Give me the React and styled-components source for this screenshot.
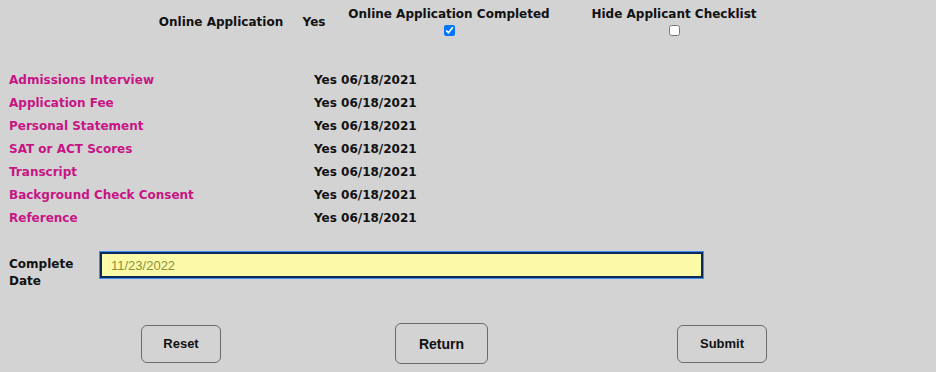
import React from "react";
import styled, { createGlobalStyle } from "styled-components";

const Global = createGlobalStyle`
  html, body {
    margin: 0;
    background: #d3d3d3;
  }
  body {
    font-family: "DejaVu Sans", sans-serif;
  }
`;

const Page = styled.div`
  width: 936px;
  height: 372px;
  background: #d3d3d3;
  font-family: "DejaVu Sans", sans-serif;
  font-weight: bold;
  font-size: 12px;
  color: #111;
`;

const Header = styled.div`
  display: flex;
  align-items: flex-start;
  padding-top: 7px;
  height: 73px;
  box-sizing: border-box;
`;

const HeaderCell = styled.div`
  width: ${(p) => p.$w}px;
  margin-left: ${(p) => p.$ml || 0}px;
  display: flex;
  flex-direction: column;
  align-items: center;
  padding-top: ${(p) => p.$pt || 0}px;
  white-space: nowrap;
`;

const Check = styled.input.attrs({ type: "checkbox" })`
  margin: 4px 0 0;
  width: 11px;
  height: 11px;
  accent-color: #0075ff;
`;

const List = styled.div`
  display: flex;
  flex-direction: column;
  padding-left: 9px;
  gap: 8px;
`;

const Row = styled.div`
  display: grid;
  grid-template-columns: 305px auto;
  line-height: 15px;
`;

const Label = styled.div`
  color: #c71585;
`;

const DateRow = styled.div`
  display: flex;
  align-items: flex-start;
  padding: 26px 0 0 9px;
`;

const DateLabel = styled.div`
  width: 91px;
  line-height: 17px;
  padding-top: 4px;
`;

const DateInput = styled.input`
  width: 603px;
  height: 26px;
  box-sizing: border-box;
  background: #fafaa8;
  border: 2px solid #0b2a5a;
  outline: 1px solid #3d8cf0;
  padding: 0 9px;
  font-family: "Liberation Sans", Arial, sans-serif;
  font-size: 13px;
  color: #8f8f3c;
`;

const Buttons = styled.div`
  display: grid;
  grid-template-columns: 141px 80px 174px 93px 189px 90px;
  align-items: center;
  margin-top: 33px;
`;

const Button = styled.button`
  grid-column: ${(p) => p.$col};
  width: ${(p) => p.$w}px;
  height: ${(p) => p.$h}px;
  background: #d3d3d3;
  border: 1px solid #6b6b6b;
  border-radius: 6px;
  font-family: "Liberation Sans", Arial, sans-serif;
  font-weight: bold;
  font-size: ${(p) => p.$fs || 13}px;
  color: #111;
  padding: 0;
`;

const items = [
  "Admissions Interview",
  "Application Fee",
  "Personal Statement",
  "SAT or ACT Scores",
  "Transcript",
  "Background Check Consent",
  "Reference",
];

export default function App() {
  return (
    <Page>
      <Global />
      <Header>
        <HeaderCell $w={134} $ml={154} $pt={8}>Online Application</HeaderCell>
        <HeaderCell $w={40} $ml={6} $pt={8}>Yes</HeaderCell>
        <HeaderCell $w={230}>
          Online Application Completed
          <Check defaultChecked />
        </HeaderCell>
        <HeaderCell $w={220}>
          Hide Applicant Checklist
          <Check />
        </HeaderCell>
      </Header>
      <List>
        {items.map((name) => (
          <Row key={name}>
            <Label>{name}</Label>
            <div>Yes 06/18/2021</div>
          </Row>
        ))}
      </List>
      <DateRow>
        <DateLabel>
          Complete
          <br />
          Date
        </DateLabel>
        <DateInput defaultValue="11/23/2022" />
      </DateRow>
      <Buttons>
        <Button $col={2} $w={80} $h={38}>Reset</Button>
        <Button $col={4} $w={93} $h={41} $fs={14}>Return</Button>
        <Button $col={6} $w={90} $h={38}>Submit</Button>
      </Buttons>
    </Page>
  );
}
